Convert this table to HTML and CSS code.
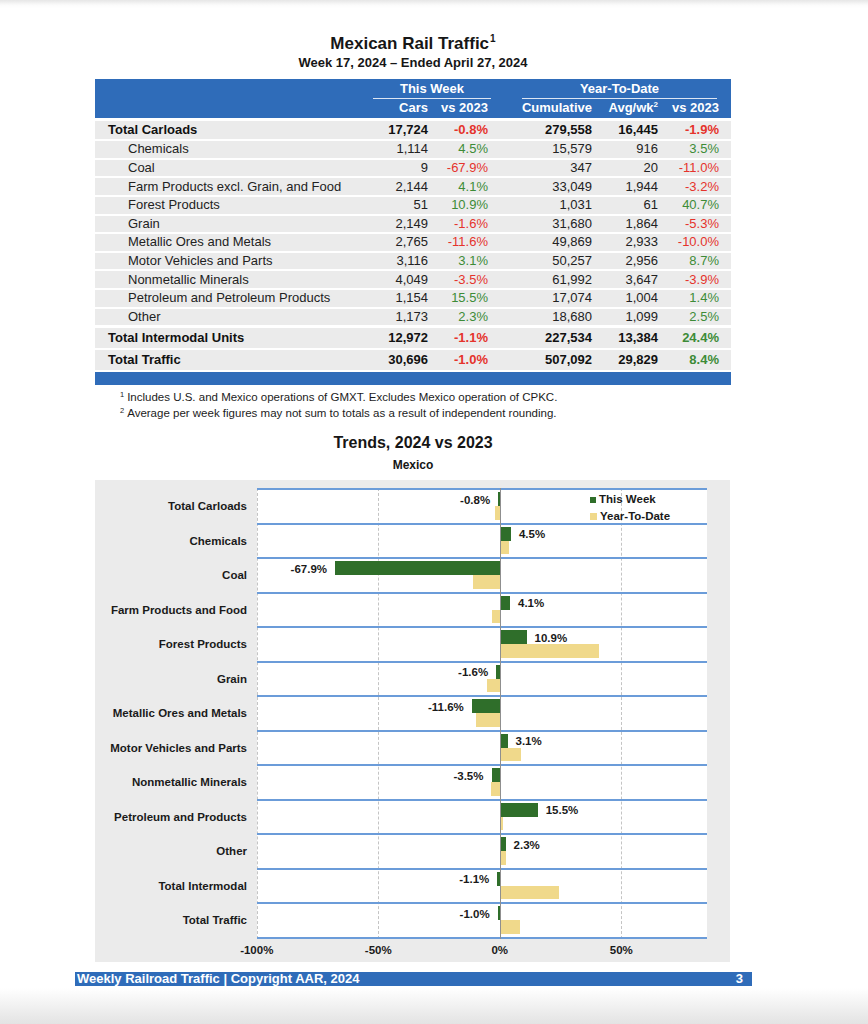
FILE: index.html
```html
<!DOCTYPE html>
<html lang="en">
<head>
<meta charset="utf-8">
<title>Mexican Rail Traffic</title>
<link rel="stylesheet" href="styles.css">
</head>
<body>
<div class="page">
  <h1 class="title">Mexican Rail Traffic<sup>1</sup></h1>
  <div class="subtitle">Week 17, 2024 – Ended April 27, 2024</div>

  <div class="thead">
    <div class="grp tw">This Week</div>
    <div class="grp ytd">Year-To-Date</div>
    <div class="ch c2">Cars</div>
    <div class="ch c3">vs 2023</div>
    <div class="ch c4">Cumulative</div>
    <div class="ch c5">Avg/wk<sup>2</sup></div>
    <div class="ch c6">vs 2023</div>
  </div>

  <div class="tbody">
    <div class="row total first"><span class="lbl">Total Carloads</span><span>17,724</span><span class="neg">-0.8%</span><span>279,558</span><span>16,445</span><span class="neg">-1.9%</span></div>
    <div class="row"><span class="lbl">Chemicals</span><span>1,114</span><span class="pos">4.5%</span><span>15,579</span><span>916</span><span class="pos">3.5%</span></div>
    <div class="row"><span class="lbl">Coal</span><span>9</span><span class="neg">-67.9%</span><span>347</span><span>20</span><span class="neg">-11.0%</span></div>
    <div class="row"><span class="lbl">Farm Products excl. Grain, and Food</span><span>2,144</span><span class="pos">4.1%</span><span>33,049</span><span>1,944</span><span class="neg">-3.2%</span></div>
    <div class="row"><span class="lbl">Forest Products</span><span>51</span><span class="pos">10.9%</span><span>1,031</span><span>61</span><span class="pos">40.7%</span></div>
    <div class="row"><span class="lbl">Grain</span><span>2,149</span><span class="neg">-1.6%</span><span>31,680</span><span>1,864</span><span class="neg">-5.3%</span></div>
    <div class="row"><span class="lbl">Metallic Ores and Metals</span><span>2,765</span><span class="neg">-11.6%</span><span>49,869</span><span>2,933</span><span class="neg">-10.0%</span></div>
    <div class="row"><span class="lbl">Motor Vehicles and Parts</span><span>3,116</span><span class="pos">3.1%</span><span>50,257</span><span>2,956</span><span class="pos">8.7%</span></div>
    <div class="row"><span class="lbl">Nonmetallic Minerals</span><span>4,049</span><span class="neg">-3.5%</span><span>61,992</span><span>3,647</span><span class="neg">-3.9%</span></div>
    <div class="row"><span class="lbl">Petroleum and Petroleum Products</span><span>1,154</span><span class="pos">15.5%</span><span>17,074</span><span>1,004</span><span class="pos">1.4%</span></div>
    <div class="row"><span class="lbl">Other</span><span>1,173</span><span class="pos">2.3%</span><span>18,680</span><span>1,099</span><span class="pos">2.5%</span></div>
    <div class="row total big im"><span class="lbl">Total Intermodal Units</span><span>12,972</span><span class="neg">-1.1%</span><span>227,534</span><span>13,384</span><span class="pos">24.4%</span></div>
    <div class="row total big"><span class="lbl">Total Traffic</span><span>30,696</span><span class="neg">-1.0%</span><span>507,092</span><span>29,829</span><span class="pos">8.4%</span></div>
  </div>
  <div class="tfoot"></div>

  <div class="notes">
    <p><sup>1</sup>Includes U.S. and Mexico operations of GMXT. Excludes Mexico operation of CPKC.</p>
    <p><sup>2</sup>Average per week figures may not sum to totals as a result of independent rounding.</p>
  </div>

  <h2 class="ctitle">Trends, 2024 vs 2023</h2>
  <div class="csub">Mexico</div>

  <div class="chart">
    <div class="cbody">
      <div class="cats">
        <div>Total Carloads</div>
        <div>Chemicals</div>
        <div>Coal</div>
        <div>Farm Products and Food</div>
        <div>Forest Products</div>
        <div>Grain</div>
        <div>Metallic Ores and Metals</div>
        <div>Motor Vehicles and Parts</div>
        <div>Nonmetallic Minerals</div>
        <div>Petroleum and Products</div>
        <div>Other</div>
        <div>Total Intermodal</div>
        <div>Total Traffic</div>
      </div>
      <div class="plot">
        <div class="grid g0"></div>
        <div class="grid g1"></div>
        <div class="grid g3"></div>

        <div class="prow">
          <div class="lane"><div class="nh"><span class="dl">-0.8%</span><i class="b tw" style="width:1.9px"></i></div><div class="ph"></div></div>
          <div class="lane y"><div class="nh"><i class="b yt" style="width:4.6px"></i></div><div class="ph"></div></div>
        </div>
        <div class="prow">
          <div class="lane"><div class="nh"></div><div class="ph"><i class="b tw" style="width:10.9px"></i><span class="dl">4.5%</span></div></div>
          <div class="lane y"><div class="nh"></div><div class="ph"><i class="b yt" style="width:8.5px"></i></div></div>
        </div>
        <div class="prow">
          <div class="lane"><div class="nh"><span class="dl">-67.9%</span><i class="b tw" style="width:165px"></i></div><div class="ph"></div></div>
          <div class="lane y"><div class="nh"><i class="b yt" style="width:26.7px"></i></div><div class="ph"></div></div>
        </div>
        <div class="prow">
          <div class="lane"><div class="nh"></div><div class="ph"><i class="b tw" style="width:10px"></i><span class="dl">4.1%</span></div></div>
          <div class="lane y"><div class="nh"><i class="b yt" style="width:7.8px"></i></div><div class="ph"></div></div>
        </div>
        <div class="prow">
          <div class="lane"><div class="nh"></div><div class="ph"><i class="b tw" style="width:26.5px"></i><span class="dl">10.9%</span></div></div>
          <div class="lane y"><div class="nh"></div><div class="ph"><i class="b yt" style="width:98.9px"></i></div></div>
        </div>
        <div class="prow">
          <div class="lane"><div class="nh"><span class="dl">-1.6%</span><i class="b tw" style="width:3.9px"></i></div><div class="ph"></div></div>
          <div class="lane y"><div class="nh"><i class="b yt" style="width:12.9px"></i></div><div class="ph"></div></div>
        </div>
        <div class="prow">
          <div class="lane"><div class="nh"><span class="dl">-11.6%</span><i class="b tw" style="width:28.2px"></i></div><div class="ph"></div></div>
          <div class="lane y"><div class="nh"><i class="b yt" style="width:24.3px"></i></div><div class="ph"></div></div>
        </div>
        <div class="prow">
          <div class="lane"><div class="nh"></div><div class="ph"><i class="b tw" style="width:7.5px"></i><span class="dl">3.1%</span></div></div>
          <div class="lane y"><div class="nh"></div><div class="ph"><i class="b yt" style="width:21.1px"></i></div></div>
        </div>
        <div class="prow">
          <div class="lane"><div class="nh"><span class="dl">-3.5%</span><i class="b tw" style="width:8.5px"></i></div><div class="ph"></div></div>
          <div class="lane y"><div class="nh"><i class="b yt" style="width:9.5px"></i></div><div class="ph"></div></div>
        </div>
        <div class="prow">
          <div class="lane"><div class="nh"></div><div class="ph"><i class="b tw" style="width:37.7px"></i><span class="dl">15.5%</span></div></div>
          <div class="lane y"><div class="nh"></div><div class="ph"><i class="b yt" style="width:3.4px"></i></div></div>
        </div>
        <div class="prow">
          <div class="lane"><div class="nh"></div><div class="ph"><i class="b tw" style="width:5.6px"></i><span class="dl">2.3%</span></div></div>
          <div class="lane y"><div class="nh"></div><div class="ph"><i class="b yt" style="width:6.1px"></i></div></div>
        </div>
        <div class="prow">
          <div class="lane"><div class="nh"><span class="dl">-1.1%</span><i class="b tw" style="width:2.7px"></i></div><div class="ph"></div></div>
          <div class="lane y"><div class="nh"></div><div class="ph"><i class="b yt" style="width:59.3px"></i></div></div>
        </div>
        <div class="prow last">
          <div class="lane"><div class="nh"><span class="dl">-1.0%</span><i class="b tw" style="width:2.4px"></i></div><div class="ph"></div></div>
          <div class="lane y"><div class="nh"></div><div class="ph"><i class="b yt" style="width:20.4px"></i></div></div>
        </div>

        <div class="axis0"></div>
        <div class="legend">
          <div class="li"><i class="sq tw"></i>This Week</div>
          <div class="li"><i class="sq yt"></i>Year-To-Date</div>
        </div>
      </div>
    </div>
    <div class="xaxis">
      <span>-100%</span><span>-50%</span><span>0%</span><span>50%</span>
    </div>
  </div>

  <div class="footer">
    <span>Weekly Railroad Traffic | Copyright AAR, 2024</span>
    <span>3</span>
  </div>
</div>
</body>
</html>
```

FILE: styles.css
```css
html, body {
  margin: 0;
  padding: 0;
}

body {
  height: 1024px;
  overflow: hidden;
  font-family: "Liberation Sans", Arial, Helvetica, sans-serif;
  color: #161616;
  background: linear-gradient(to bottom, #e6e6e6 0, #fbfbfb 5px, #ffffff 8px, #ffffff 988px, #e3e3e3 1024px);
}

.page {
  width: 636px;
  margin-left: 95px;
  padding-top: 34px;
}

.title {
  margin: 0;
  text-align: center;
  font-size: 17px;
  line-height: 20px;
  font-weight: bold;
}

.title sup {
  font-size: 10px;
  line-height: 0;
  vertical-align: 7px;
  margin-left: 1px;
}

.subtitle {
  margin-top: 1px;
  text-align: center;
  font-size: 13px;
  line-height: 16px;
  font-weight: bold;
}

/* ---------- table ---------- */
.thead {
  margin-top: 7.5px;
  height: 39px;
  box-sizing: border-box;
  padding: 1px 12px 0 13px;
  background: #2f6cb9;
  color: #fff;
  font-weight: bold;
  font-size: 13px;
  display: grid;
  grid-template-columns: 1fr 60px 60px 104px 66px 61px;
  grid-template-rows: 19.5px 18.5px;
}

.grp {
  grid-row: 1;
  text-align: center;
  line-height: 18px;
  border-bottom: 1.5px solid #dce6f4;
}

.grp.tw {
  grid-column: 2 / 4;
  margin: 0 -3px 0 5px;
}

.grp.ytd {
  grid-column: 4 / 7;
  margin: 0 2px 0 34px;
}

.ch {
  grid-row: 2;
  text-align: right;
  line-height: 18px;
  white-space: nowrap;
}

.c2 { grid-column: 2; }
.c3 { grid-column: 3; }
.c4 { grid-column: 4; }
.c5 { grid-column: 5; }
.c6 { grid-column: 6; }

.ch sup {
  font-size: 8px;
  line-height: 0;
  vertical-align: 5px;
}

.tbody {
  margin-top: 3.2px;
  display: flex;
  flex-direction: column;
  gap: 2px;
}

.row {
  display: grid;
  grid-template-columns: 1fr 60px 60px 104px 66px 61px;
  padding: 0 12px 0 13px;
  height: 16.6px;
  align-items: center;
  background: #ebebeb;
  font-size: 13px;
  line-height: 16px;
  color: #222;
}

.row > span {
  text-align: right;
  white-space: nowrap;
}

.row > .lbl {
  text-align: left;
  padding-left: 20px;
}

.row.total {
  font-weight: bold;
  color: #111;
}

.row.total > .lbl {
  padding-left: 0;
}

.row.first {
  height: 18.5px;
}

.row.big {
  height: 20px;
}

.row.im {
  margin-top: 0.5px;
}

.neg { color: #e5332c; }
.pos { color: #3d8b37; }

.tfoot {
  margin-top: 2px;
  height: 13px;
  background: #2f6cb9;
}

/* ---------- notes ---------- */
.notes {
  margin-top: 4px;
  padding-left: 25px;
  font-size: 11.5px;
  line-height: 16px;
  color: #1c1c1c;
}

.notes p {
  margin: 0;
}

.notes sup {
  font-size: 7.5px;
  line-height: 0;
  vertical-align: 4px;
  margin-right: 3px;
}

/* ---------- chart ---------- */
.ctitle {
  margin: 12px 0 0;
  text-align: center;
  font-size: 16px;
  line-height: 20px;
  font-weight: bold;
}

.csub {
  margin-top: 4px;
  text-align: center;
  font-size: 12px;
  line-height: 16px;
  font-weight: bold;
}

.chart {
  margin-top: 7px;
  width: 635px;
  height: 482px;
  box-sizing: border-box;
  padding-top: 8.5px;
  background: #ebebeb;
}

.cbody {
  display: flex;
}

.cats {
  width: 162px;
  padding-top: 1px;
  font-size: 11.5px;
  font-weight: bold;
  color: #1a1a1a;
}

.cats > div {
  height: 34.5px;
  display: flex;
  align-items: center;
  justify-content: flex-end;
  padding-right: 10px;
  white-space: nowrap;
}

.plot {
  position: relative;
  width: 450px;
  background: #fff;
}

.grid {
  position: absolute;
  top: 0;
  bottom: 0;
  width: 0;
  border-left: 1px dashed #c4c4c4;
}

.g0 { left: 0; }
.g1 { left: 121px; }
.g3 { left: 364px; }

.axis0 {
  position: absolute;
  top: 0;
  bottom: 0;
  left: 242.5px;
  width: 1.5px;
  background: #8f8f8f;
}

.prow {
  position: relative;
  height: 34.5px;
  box-sizing: border-box;
  border-top: 2px solid #6b9cd9;
  padding-top: 2px;
}

.prow.last {
  height: 36.5px;
  border-bottom: 2px solid #6b9cd9;
}

.lane {
  display: flex;
  height: 14px;
}

.lane.y {
  height: 13.5px;
}

.nh {
  width: 243px;
  display: flex;
  justify-content: flex-end;
  align-items: center;
  gap: 8px;
}

.ph {
  width: 207px;
  display: flex;
  align-items: center;
  gap: 8px;
}

.b {
  display: block;
  height: 100%;
  flex: none;
}

.b.tw { background: #2f6e2a; }
.b.yt { background: #f0d98b; }

.dl {
  font-size: 11.5px;
  font-weight: bold;
  line-height: 14px;
  white-space: nowrap;
  color: #1a1a1a;
  position: relative;
  top: 0.5px;
}

.legend {
  position: absolute;
  top: 3px;
  left: 333px;
  font-size: 11.5px;
  font-weight: bold;
  line-height: 17px;
  color: #1a1a1a;
}

.li {
  display: flex;
  align-items: center;
  gap: 3px;
}

.sq {
  display: block;
  width: 6px;
  height: 6px;
}

.sq.tw { background: #2f6e2a; }
.sq.yt { width: 7px; height: 7px; background: #f0d98b; }

.xaxis {
  display: flex;
  padding-left: 101px;
  height: 23px;
  align-items: center;
  font-size: 11.5px;
  font-weight: bold;
  color: #1a1a1a;
}

.xaxis span {
  width: 121.5px;
  text-align: center;
}

/* ---------- footer ---------- */
.footer {
  margin-top: 10px;
  margin-left: -20px;
  width: 677px;
  height: 14px;
  box-sizing: border-box;
  padding: 0 9px 0 2px;
  display: flex;
  justify-content: space-between;
  background: #2f6cb9;
  color: #fff;
  font-size: 13px;
  font-weight: bold;
  line-height: 14px;
}
```
